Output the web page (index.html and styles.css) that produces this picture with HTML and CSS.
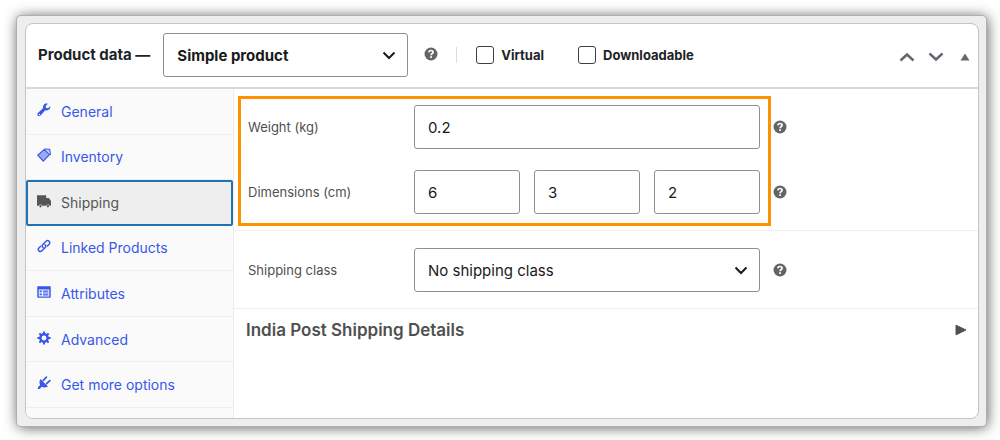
FILE: index.html
```html
<!DOCTYPE html>
<html lang="en">
<head>
<meta charset="utf-8">
<meta name="viewport" content="width=device-width, initial-scale=1">
<title>Product data</title>
<link rel="stylesheet" href="styles.css">
</head>
<body>
<svg class="sprite" aria-hidden="true">
  <symbol id="help" viewBox="0 0 14 14"><circle cx="7" cy="7" r="6.5" fill="#646464"/><path d="M4.900 5.300C5 4.200 5.800 3.500 7 3.500s2.100.7 2.100 1.700C9.100 6.500 7.100 6.600 7.100 8.300" fill="none" stroke="#fff" stroke-width="1.700"/><rect x="6.200" y="9.200" width="1.800" height="1.700" fill="#fff"/></symbol>
  <symbol id="chevron" viewBox="0 0 14 9"><path d="M1.500 1.500 7 7l5.500-5.500" fill="none" stroke="currentColor" stroke-width="2"/></symbol>
</svg>
<main class="frame">
  <section class="panel">
    <header class="panel-header">
      <h2 class="panel-title"><label for="type">Product data —</label></h2>
      <div class="select type-select">
        <select id="type"><option>Simple product</option><option>Variable product</option></select>
        <svg class="select-arrow"><use href="#chevron"/></svg>
      </div>
      <svg class="help type-help" role="img" aria-label="Help"><use href="#help"/></svg>
      <div class="options">
        <label class="option"><input type="checkbox">Virtual</label>
        <label class="option"><input type="checkbox">Downloadable</label>
      </div>
      <div class="actions">
        <button type="button" aria-label="Move up"><svg class="move" viewBox="0 0 16 10"><path d="m1.500 8.500 6.500-6 6.500 6"/></svg></button>
        <button type="button" aria-label="Move down"><svg class="move" viewBox="0 0 16 10"><path d="m1.500 1.500 6.500 6 6.500-6"/></svg></button>
        <button type="button" aria-label="Toggle panel"><svg class="toggle" viewBox="0 0 10 8"><path d="M5 .5 9.500 7.500h-9z"/></svg></button>
      </div>
    </header>
    <div class="panel-body">
      <nav class="tabs">
        <a class="tab" href="#general"><svg viewBox="0 0 16 16"><path d="M15.200 3.600 12.600 6 10.300 5.600 9.900 3.400 12.400.9C10.600.2 8.700.7 7.600 2.200c-.8 1.100-.9 2.300-.5 3.500L1.300 11c-1.200 1.100-1.200 2.500-.4 3.400.9.9 2.500.9 3.500-.3l5-5.700c1.500.5 3.100.2 4.300-.9 1.200-1.100 1.700-2.500 1.500-3.900zM2.800 13.900a.8.8 0 1 1 0-1.600.8.8 0 0 1 0 1.600z"/></svg>General</a>
        <a class="tab" href="#inventory"><svg viewBox="0 0 16 16"><path d="M.8 8.200 8.500 1.600l5.800 6L7.200 15z" fill-opacity=".5" stroke="currentColor" stroke-width="1.400" stroke-linejoin="round"/><path d="m8.500 1.200 6 .3 1 6.300" fill="none" stroke="currentColor" stroke-width="1.200"/><path d="m10.500 1.500 4 .2.600 4.600z" fill-opacity=".35"/></svg>Inventory</a>
        <a class="tab active" href="#shipping" aria-current="page"><svg viewBox="0 0 16 16"><path d="M0 1.500H10.500V4.500h3L16 8v5.500h-1.500a2.100 2.100 0 0 0-4 0H6a2.100 2.100 0 0 0-4 0H0z"/><circle cx="4" cy="14" r="1.300"/><circle cx="12.500" cy="14" r="1.300"/></svg>Shipping</a>
        <a class="tab" href="#linked"><svg viewBox="0 0 16 16"><g fill="none" stroke="currentColor" stroke-width="1.700" stroke-linecap="round"><path d="M6.800 9.600c-1-1.100-.9-2.500.1-3.500l3.500-3.500c1-1 2.400-1 3.400-.1 1 1 .9 2.400 0 3.400l-2 2"/><path d="M9.200 6.500c1 1.100.9 2.500-.1 3.500l-3.500 3.500c-1 1-2.400 1-3.400.1-1-1-.9-2.400 0-3.400l2-2"/></g></svg>Linked Products</a>
        <a class="tab" href="#attributes"><svg viewBox="0 0 16 16"><path fill-rule="evenodd" d="M1 1.500h14a.7.7 0 0 1 .7.700v11.600a.7.7 0 0 1-.7.700H1a.7.7 0 0 1-.7-.7V2.200a.7.7 0 0 1 .7-.7zM2 5v8h12V5zm1 1.300h2.500v2H3zm3.700 0H13v1.300H6.700zm0 2.300H13v1.200H6.700zM3 9.700h2.500v2H3zm3.700 1H13v1.200H6.700z"/></svg>Attributes</a>
        <a class="tab" href="#advanced"><svg viewBox="0 0 16 16"><circle cx="8" cy="8" r="4.200" fill="none" stroke="currentColor" stroke-width="2.800"/><path d="M8 .5v3M8 12.500v3M.5 8h3M12.500 8h3M2.700 2.700l2.100 2.100M11.200 11.200l2.100 2.100M2.700 13.300l2.100-2.100M11.200 4.800l2.100-2.100" stroke="currentColor" stroke-width="2.300"/></svg>Advanced</a>
        <a class="tab" href="#more"><svg viewBox="0 0 16 16"><path d="M4 3.500 12.500 12c-2 1.300-5.200 1.500-7 .4L3 14.900.9 14.800l.2-2L3.600 10.300C2.400 8.300 2.700 5.300 4 3.500z"/><path d="m7.200 5 3.500-3.600M11 8.800l3.600-3.500" stroke="currentColor" stroke-width="2" stroke-linecap="round"/></svg>Get more options</a>
      </nav>
      <form class="fields">
        <div class="group">
          <div class="highlight"></div>
          <div class="row">
            <label for="weight">Weight (kg)</label>
            <input class="text" id="weight" type="text" value="0.2">
            <svg class="help" role="img" aria-label="Help"><use href="#help"/></svg>
          </div>
          <div class="row">
            <label for="length">Dimensions (cm)</label>
            <div class="dimensions">
              <input class="text" id="length" type="text" value="6" aria-label="Length">
              <input class="text" type="text" value="3" aria-label="Width">
              <input class="text" type="text" value="2" aria-label="Height">
            </div>
            <svg class="help" role="img" aria-label="Help"><use href="#help"/></svg>
          </div>
        </div>
        <div class="group">
          <div class="row">
            <label for="class">Shipping class</label>
            <div class="select">
              <select id="class"><option>No shipping class</option></select>
              <svg class="select-arrow"><use href="#chevron"/></svg>
            </div>
            <svg class="help" role="img" aria-label="Help"><use href="#help"/></svg>
          </div>
        </div>
        <button class="details" type="button">India Post Shipping Details<svg viewBox="0 0 12 12"><path d="M1 1.200 11 6 1 10.800z"/></svg></button>
      </form>
    </div>
  </section>
</main>
</body>
</html>
```
FILE: styles.css
```css
* {
  box-sizing: border-box;
}

body {
  margin: 0;
  min-height: 100vh;
  display: flex;
  padding: 16px 14px 14px 17px;
  background: #fff;
  color: #1d2327;
  font-family: Inter, "Liberation Sans", sans-serif;
  font-size: 13px;
}

.sprite {
  position: absolute;
  width: 0;
  height: 0;
}

.frame {
  flex: 1;
  display: flex;
  padding: 7px 7px 7px 8px;
  border-radius: 4px;
  background: #eee;
  box-shadow: 0 0 0 1px #b0b0b0, 1px 1px 14px rgba(0, 0, 0, .7);
}

.panel {
  flex: 1;
  min-width: 0;
  display: flex;
  flex-direction: column;
  border: 1px solid #c3c4c7;
  border-radius: 8px;
  background: #fff;
  overflow: hidden;
}

.panel-header {
  display: flex;
  align-items: center;
  min-height: 65px;
  padding: 0 8px 1px 12px;
  border-bottom: 2px solid #d8d8d9;
}

.panel-title {
  margin: 0 13px 2px 0;
  font-size: 15px;
  font-weight: 700;
}

.select {
  position: relative;
}

.type-select {
  width: 245px;
}

.select select,
.text {
  width: 100%;
  height: 44px;
  margin: 0;
  padding: 0 13px;
  border: 1px solid #8c8f94;
  border-radius: 3px;
  background: #fff;
  color: #1a1a1a;
  font: inherit;
  font-size: 15px;
  appearance: none;
}

.type-select select {
  font-weight: 700;
}

.select-arrow {
  position: absolute;
  top: 18px;
  right: 12px;
  width: 14px;
  height: 9px;
  color: #1a1a1a;
  pointer-events: none;
}

.help {
  width: 14px;
  height: 14px;
}

.type-help {
  margin: 0 18px 3px 16px;
}

.options {
  display: flex;
  align-items: center;
  gap: 34px;
  padding-left: 20px;
  background: linear-gradient(#ddd, #ddd) left / 1px 16px no-repeat;
}

.option {
  display: flex;
  align-items: center;
  gap: 7px;
  font-weight: 700;
}

.option input {
  width: 18px;
  height: 18px;
  margin: 0;
  border: 1px solid #3c4046;
  border-radius: 3px;
  appearance: none;
}

.actions {
  display: flex;
  align-items: center;
  gap: 13px;
  margin-left: auto;
  padding-top: 3px;
}

.actions button {
  display: flex;
  padding: 0;
  border: 0;
  background: none;
}

.move {
  width: 16px;
  height: 10px;
  fill: none;
  stroke: #646970;
  stroke-width: 2.500;
}

.toggle {
  width: 10px;
  height: 8px;
  margin-left: 3px;
  fill: #646970;
}

.panel-body {
  flex: 1;
  display: flex;
}

.tabs {
  width: 208px;
  display: grid;
  grid-auto-rows: 1fr;
  padding-bottom: 10px;
  border-right: 1px solid #eee;
  background: #fafafa;
}

.tab {
  display: flex;
  align-items: center;
  gap: 10px;
  padding: 0 11px;
  border-bottom: 1px solid #eee;
  color: #3858e9;
  font-size: 14px;
  text-decoration: none;
}

.tab svg {
  width: 14px;
  height: 14px;
  margin-bottom: 3px;
  fill: currentColor;
}

.tab.active {
  border: 2px solid #2271b1;
  border-radius: 2px;
  padding: 0 9px;
  background: #eee;
  color: #555;
}

.fields {
  flex: 1;
  min-width: 0;
}

.group {
  position: relative;
  display: grid;
  gap: 21px;
  padding: 16px 14px;
  border-bottom: 1px solid #eee;
}

.group + .group {
  padding-top: 17px;
}

.highlight {
  position: absolute;
  inset: 7px auto 4px 4px;
  width: 533px;
  border: 3px solid #ff9100;
  pointer-events: none;
}

.row {
  display: grid;
  grid-template-columns: 166px minmax(0, 346px) 14px;
  align-items: center;
  color: #505050;
}

.row .help {
  margin-left: 13px;
}

.dimensions {
  display: grid;
  grid-template-columns: repeat(3, 1fr);
  gap: 14px;
}

.details {
  width: 100%;
  display: flex;
  align-items: center;
  justify-content: space-between;
  padding: 11px 11px 11px 12px;
  border: 0;
  background: none;
  color: #505050;
  font: inherit;
  font-size: 17px;
  font-weight: 600;
}

.details svg {
  width: 12px;
  height: 12px;
  fill: #505050;
  stroke: #505050;
  stroke-linejoin: round;
}
```
